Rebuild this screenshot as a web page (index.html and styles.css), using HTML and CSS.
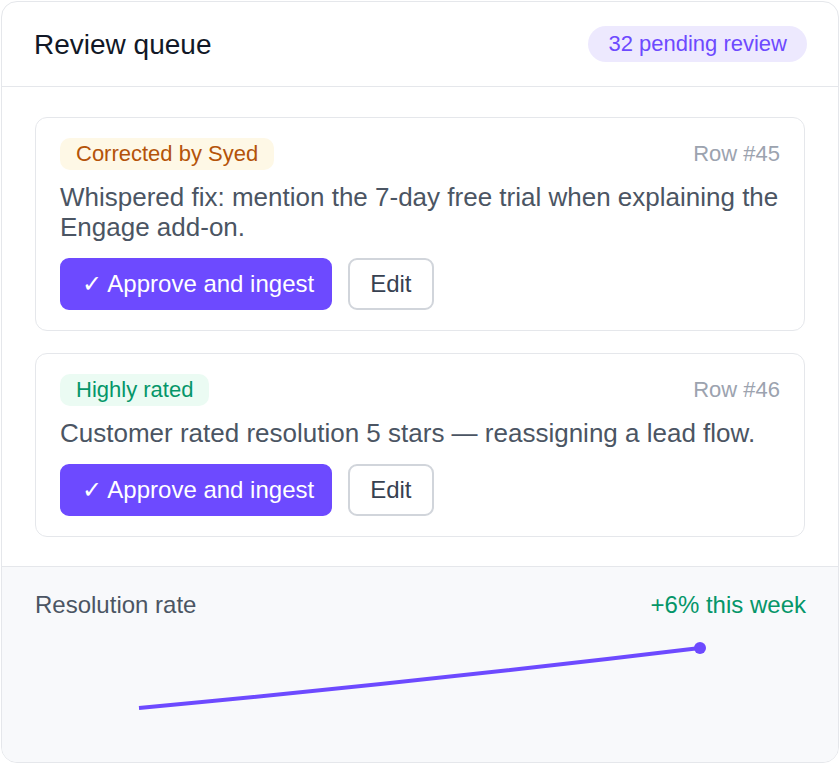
FILE: index.html
```html
<!DOCTYPE html>
<html>
<head>
<meta charset="utf-8">
<link rel="stylesheet" href="styles.css">
</head>
<body>
<div class="panel">
  <header class="panel-head">
    <h1 class="title">Review queue</h1>
    <span class="count">32 pending review</span>
  </header>
  <section class="queue">
    <article class="item">
      <div class="item-top">
        <span class="tag tag-amber">Corrected by Syed</span>
        <span class="row-id">Row #45</span>
      </div>
      <p class="item-text">Whispered fix: mention the 7-day free trial when explaining the Engage add-on.</p>
      <div class="actions">
        <button class="btn btn-primary">✓ Approve and ingest</button>
        <button class="btn btn-ghost">Edit</button>
      </div>
    </article>
    <article class="item">
      <div class="item-top">
        <span class="tag tag-green">Highly rated</span>
        <span class="row-id">Row #46</span>
      </div>
      <p class="item-text">Customer rated resolution 5 stars — reassigning a lead flow.</p>
      <div class="actions">
        <button class="btn btn-primary">✓ Approve and ingest</button>
        <button class="btn btn-ghost">Edit</button>
      </div>
    </article>
  </section>
  <footer class="stats">
    <div class="stats-head">
      <span class="stats-label">Resolution rate</span>
      <span class="stats-delta">+6% this week</span>
    </div>
    <svg class="chart" width="770" height="100" viewBox="0 0 770 100">
      <path d="M104 78 Q384 52 665 18" fill="none" stroke="#6d4aff" stroke-width="4"/>
      <circle cx="665" cy="18" r="6" fill="#6d4aff"/>
    </svg>
  </footer>
</div>
</body>
</html>
```

FILE: styles.css
```css
* { box-sizing: border-box; }
html, body { margin: 0; padding: 0; background: #ffffff; }
body {
  padding: 1px;
  font-family: "Liberation Sans", Arial, sans-serif;
}
.panel {
  width: 838px;
  height: 762px;
  border: 1px solid #e5e7eb;
  border-radius: 16px;
  overflow: hidden;
  display: flex;
  flex-direction: column;
  background: #fff;
}
.panel-head {
  height: 85px;
  border-bottom: 1px solid #e5e7eb;
  display: flex;
  align-items: center;
  justify-content: space-between;
  padding: 0 31px 0 32px;
}
.title {
  margin: 0 0 0 0;
  padding-top: 1px;
  font-size: 28px;
  font-weight: 400;
  color: #111827;
}
.count {
  background: #ede9fe;
  color: #6d4aff;
  font-size: 22px;
  height: 36px;
  line-height: 36px;
  padding: 0 20px;
  border-radius: 18px;
}
.queue {
  padding: 30px 33px 29px;
  display: flex;
  flex-direction: column;
  gap: 22px;
}
.item {
  border: 1px solid #e5e7eb;
  border-radius: 12px;
  padding: 20px 24px;
}
.item-top {
  display: flex;
  justify-content: space-between;
  align-items: center;
}
.tag {
  font-size: 22px;
  height: 32px;
  line-height: 32px;
  padding: 0 16px;
  border-radius: 10px;
}
.tag-amber { background: #fef8e6; color: #b45309; }
.tag-green { background: #ebfbf3; color: #059669; }
.row-id {
  font-size: 22px;
  color: #9ca3af;
}
.item-text {
  margin: 12px 0 16px;
  font-size: 26px;
  line-height: 30px;
  color: #4b5563;
}
.actions {
  display: flex;
  gap: 16px;
}
.btn {
  font-family: inherit;
  font-size: 24px;
  height: 52px;
  padding: 0 20px;
  border-radius: 9px;
  cursor: pointer;
}
.btn-primary {
  background: #6d4aff;
  border: 2px solid #6d4aff;
  color: #ffffff;
  padding: 0 16px 0 20px;
}
.btn-ghost {
  background: #ffffff;
  border: 2px solid #d1d5db;
  color: #374151;
}
.stats {
  flex: 1;
  background: #f8f9fb;
  border-top: 1px solid #e5e7eb;
  padding: 26px 32px 0 33px;
}
.stats-head {
  display: flex;
  justify-content: space-between;
  font-size: 24px;
  line-height: 24px;
}
.stats-label { color: #4b5563; }
.stats-delta { color: #059669; }
.chart {
  display: block;
  margin-top: 13px;
}
```
